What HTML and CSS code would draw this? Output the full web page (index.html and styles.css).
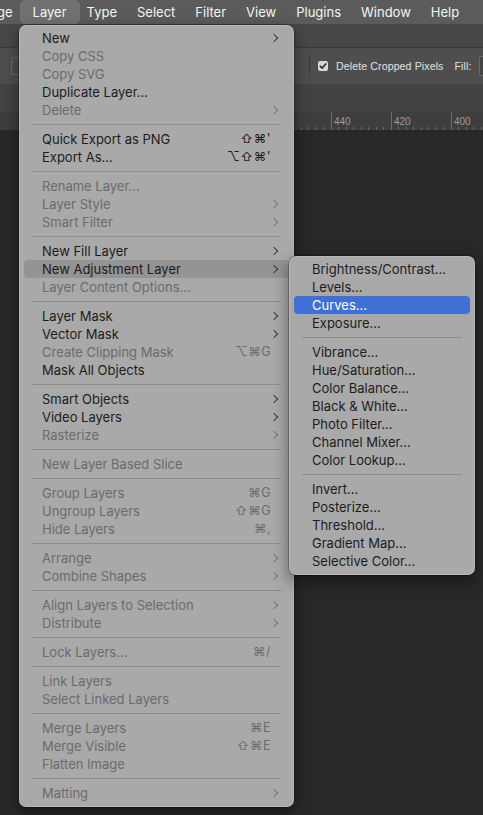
FILE: index.html
```html
<!DOCTYPE html>
<html>
<head>
<meta charset="utf-8">
<link rel="stylesheet" href="styles.css">
</head>
<body>
<div class="app">
  <div class="menubar">
    <span class="mb-item clip">ge</span>
    <span class="mb-item active">Layer</span>
    <span class="mb-item">Type</span>
    <span class="mb-item">Select</span>
    <span class="mb-item">Filter</span>
    <span class="mb-item">View</span>
    <span class="mb-item">Plugins</span>
    <span class="mb-item">Window</span>
    <span class="mb-item">Help</span>
  </div>
  <div class="titlebar"></div>
  <div class="options">
    <div class="opt-box"></div>
    <div class="opt-right">
      <div class="opt-divider"></div>
      <span class="checkbox"><svg width="10" height="10" viewBox="0 0 10 10"><path d="M2.3 5.2 L4.2 7.1 L7.8 2.9" fill="none" stroke="#2a2a2a" stroke-width="1.6" stroke-linecap="round" stroke-linejoin="round"/></svg></span>
      <span class="opt-label">Delete Cropped Pixels</span>
      <span class="opt-label fill">Fill:</span>
      <div class="opt-input"></div>
    </div>
  </div>
  <div class="panelbar"></div>
  <div class="ruler">
    <span class="r-cell">540</span><span class="r-cell">520</span><span class="r-cell">500</span><span class="r-cell">480</span><span class="r-cell">460</span><span class="r-cell">440</span><span class="r-cell">420</span><span class="r-cell">400</span>
  </div>
  <div class="canvas"></div>
</div>

<div class="menu main-menu">
  <div class="mi"><span class="lbl">New</span><span class="chev"></span></div>
  <div class="mi dis"><span class="lbl">Copy CSS</span><span class="slot"></span></div>
  <div class="mi dis"><span class="lbl">Copy SVG</span><span class="slot"></span></div>
  <div class="mi"><span class="lbl">Duplicate Layer...</span><span class="slot"></span></div>
  <div class="mi dis"><span class="lbl">Delete</span><span class="chev"></span></div>
  <div class="sep"></div>
  <div class="mi"><span class="lbl">Quick Export as PNG</span><span class="sc">⇧⌘'</span><span class="slot"></span></div>
  <div class="mi"><span class="lbl">Export As...</span><span class="sc">⌥⇧⌘'</span><span class="slot"></span></div>
  <div class="sep"></div>
  <div class="mi dis"><span class="lbl">Rename Layer...</span><span class="slot"></span></div>
  <div class="mi dis"><span class="lbl">Layer Style</span><span class="chev"></span></div>
  <div class="mi dis"><span class="lbl">Smart Filter</span><span class="chev"></span></div>
  <div class="sep"></div>
  <div class="mi"><span class="lbl">New Fill Layer</span><span class="chev"></span></div>
  <div class="mi hover"><span class="lbl">New Adjustment Layer</span><span class="chev"></span></div>
  <div class="mi dis"><span class="lbl">Layer Content Options...</span><span class="slot"></span></div>
  <div class="sep"></div>
  <div class="mi"><span class="lbl">Layer Mask</span><span class="chev"></span></div>
  <div class="mi"><span class="lbl">Vector Mask</span><span class="chev"></span></div>
  <div class="mi dis"><span class="lbl">Create Clipping Mask</span><span class="sc">⌥⌘G</span><span class="slot"></span></div>
  <div class="mi"><span class="lbl">Mask All Objects</span><span class="slot"></span></div>
  <div class="sep"></div>
  <div class="mi"><span class="lbl">Smart Objects</span><span class="chev"></span></div>
  <div class="mi"><span class="lbl">Video Layers</span><span class="chev"></span></div>
  <div class="mi dis"><span class="lbl">Rasterize</span><span class="chev"></span></div>
  <div class="sep"></div>
  <div class="mi dis"><span class="lbl">New Layer Based Slice</span><span class="slot"></span></div>
  <div class="sep"></div>
  <div class="mi dis"><span class="lbl">Group Layers</span><span class="sc">⌘G</span><span class="slot"></span></div>
  <div class="mi dis"><span class="lbl">Ungroup Layers</span><span class="sc">⇧⌘G</span><span class="slot"></span></div>
  <div class="mi dis"><span class="lbl">Hide Layers</span><span class="sc">⌘,</span><span class="slot"></span></div>
  <div class="sep"></div>
  <div class="mi dis"><span class="lbl">Arrange</span><span class="chev"></span></div>
  <div class="mi dis"><span class="lbl">Combine Shapes</span><span class="chev"></span></div>
  <div class="sep"></div>
  <div class="mi dis"><span class="lbl">Align Layers to Selection</span><span class="chev"></span></div>
  <div class="mi dis"><span class="lbl">Distribute</span><span class="chev"></span></div>
  <div class="sep"></div>
  <div class="mi dis"><span class="lbl">Lock Layers...</span><span class="sc">⌘/</span><span class="slot"></span></div>
  <div class="sep"></div>
  <div class="mi dis"><span class="lbl">Link Layers</span><span class="slot"></span></div>
  <div class="mi dis"><span class="lbl">Select Linked Layers</span><span class="slot"></span></div>
  <div class="sep"></div>
  <div class="mi dis"><span class="lbl">Merge Layers</span><span class="sc">⌘E</span><span class="slot"></span></div>
  <div class="mi dis"><span class="lbl">Merge Visible</span><span class="sc">⇧⌘E</span><span class="slot"></span></div>
  <div class="mi dis"><span class="lbl">Flatten Image</span><span class="slot"></span></div>
  <div class="sep"></div>
  <div class="mi dis"><span class="lbl">Matting</span><span class="chev"></span></div>
</div>

<div class="menu sub-menu">
  <div class="mi"><span class="lbl">Brightness/Contrast...</span></div>
  <div class="mi"><span class="lbl">Levels...</span></div>
  <div class="mi sel"><span class="lbl">Curves...</span></div>
  <div class="mi"><span class="lbl">Exposure...</span></div>
  <div class="sep"></div>
  <div class="mi"><span class="lbl">Vibrance...</span></div>
  <div class="mi"><span class="lbl">Hue/Saturation...</span></div>
  <div class="mi"><span class="lbl">Color Balance...</span></div>
  <div class="mi"><span class="lbl">Black &amp; White...</span></div>
  <div class="mi"><span class="lbl">Photo Filter...</span></div>
  <div class="mi"><span class="lbl">Channel Mixer...</span></div>
  <div class="mi"><span class="lbl">Color Lookup...</span></div>
  <div class="sep"></div>
  <div class="mi"><span class="lbl">Invert...</span></div>
  <div class="mi"><span class="lbl">Posterize...</span></div>
  <div class="mi"><span class="lbl">Threshold...</span></div>
  <div class="mi"><span class="lbl">Gradient Map...</span></div>
  <div class="mi"><span class="lbl">Selective Color...</span></div>
</div>
</body>
</html>
```
FILE: styles.css
```css
html, body {
  margin: 0;
  padding: 0;
}
body {
  width: 483px;
  height: 815px;
  overflow: hidden;
  background: #282828;
  font-family: Inter, "DejaVu Sans", sans-serif;
  position: relative;
}
.app {
  display: flex;
  flex-direction: column;
  height: 815px;
}
.menubar {
  height: 24px;
  flex: none;
  background: #5b5b5b;
  display: flex;
  align-items: center;
  gap: 20px;
  color: #f4f4f4;
  font-size: 13px;
  font-weight: 400;
  white-space: nowrap;
}
.mb-item {
  line-height: 24px;
}
.mb-item.clip {
  margin-left: -3px;
}
.mb-item.active {
  background: #717171;
  border-radius: 5px;
  padding: 0 13px;
  margin: 0 -13px;
}
.titlebar {
  height: 23px;
  flex: none;
  background: #474747;
  border-bottom: 1px solid #3a3a3a;
}
.options {
  height: 36px;
  flex: none;
  background: #4e4e4e;
  display: flex;
  align-items: center;
  overflow: hidden;
  white-space: nowrap;
}
.opt-box {
  margin-left: 11px;
  width: 60px;
  height: 16px;
  border: 1px solid #6a6a6a;
  border-radius: 2px;
  flex: none;
}
.opt-right {
  margin-left: 236px;
  display: flex;
  align-items: center;
  flex: none;
}
.opt-divider {
  width: 1px;
  height: 26px;
  background: #3d3d3d;
}
.checkbox {
  margin-left: 8px;
  width: 10px;
  height: 10px;
  border-radius: 2px;
  background: #d6d6d6;
  display: flex;
}
.opt-label {
  margin-left: 8px;
  font-family: "Liberation Sans", sans-serif;
  font-size: 10.6px;
  color: #e2e2e2;
  letter-spacing: 0.1px;
}
.opt-label.fill {
  margin-left: 11px;
}
.opt-input {
  margin-left: 7px;
  width: 30px;
  height: 18px;
  border: 1px solid #6a6a6a;
  border-radius: 2px;
  background: #444;
}
.panelbar {
  height: 28px;
  flex: none;
  background: #434343;
}
.ruler {
  height: 18px;
  flex: none;
  background-color: #3e3e3e;
  background-image: repeating-linear-gradient(to right, #6c6c6c 0 1px, transparent 1px 7.5px);
  background-size: 100% 3px;
  background-repeat: no-repeat;
  background-position: 31px 100%;
  display: flex;
  padding-left: 31px;
  overflow: hidden;
}
.r-cell {
  flex: none;
  width: 60px;
  box-sizing: border-box;
  border-left: 1px solid #6c6c6c;
  padding-left: 2px;
  font-family: "Liberation Sans", sans-serif;
  font-size: 10px;
  line-height: 16px;
  color: #9c9c9c;
  padding-top: 2px;
}
.canvas {
  flex: 1;
  background: #282828;
}

/* Menus */
.menu {
  position: absolute;
  background: #a9a9a9;
  border-radius: 7px;
  box-shadow: 0 0 0 0.5px rgba(0,0,0,0.5), inset 0 0 0 1px rgba(255,255,255,0.18), 0 6px 16px rgba(0,0,0,0.45);
  padding: 4px 0 5px;
  font-size: 13px;
  color: #1c1c1c;
  white-space: nowrap;
}
.main-menu {
  left: 19px;
  top: 25px;
  width: 275px;
}
.sub-menu {
  left: 289px;
  top: 256px;
  width: 186px;
}
.mi {
  height: 18px;
  line-height: 18px;
  margin: 0 5px;
  padding: 0 11px 0 18px;
  display: flex;
  align-items: center;
  border-radius: 4px;
}
.mi .lbl {
  flex: 1;
}
.mi.dis {
  color: #6b6b6b;
}
.mi.hover {
  background: #949494;
}
.mi.sel {
  background: #3f70d6;
  color: #ffffff;
}
.sc {
  font-family: Inter, "DejaVu Sans", sans-serif;
  font-size: 12.5px;
  letter-spacing: 0.5px;
  margin-right: 1px;
}
.slot, .chev {
  width: 6px;
  height: 18px;
  flex: none;
  position: relative;
}
.chev::before {
  content: "";
  position: absolute;
  left: -1px;
  top: 6px;
  width: 5px;
  height: 5px;
  border-right: 1.3px solid #3a3a3a;
  border-top: 1.3px solid #3a3a3a;
  transform: rotate(45deg);
  transform-origin: center;
}
.mi.dis .chev::before {
  border-color: #777777;
}
.sep {
  height: 1px;
  margin: 5px 13px;
  background: #8c8c8c;
}
```
